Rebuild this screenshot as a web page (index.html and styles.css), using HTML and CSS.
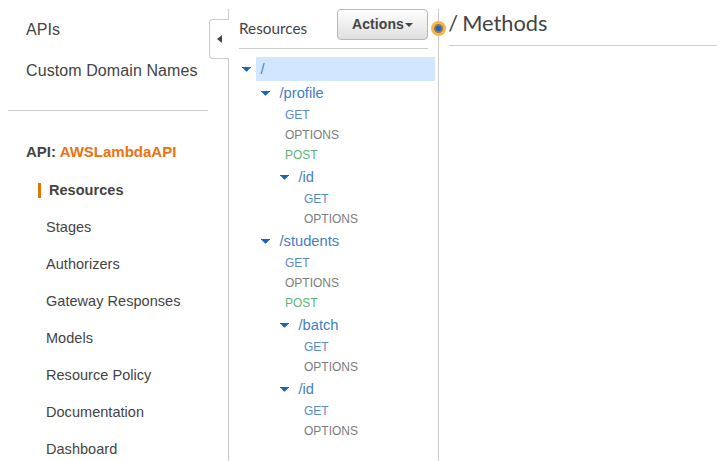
FILE: index.html
```html
<!DOCTYPE html>
<html lang="en">
<head>
<meta charset="utf-8">
<title>API Gateway - Resources</title>
<link rel="stylesheet" href="styles.css">
</head>
<body>
<div class="layout">
  <nav class="sidebar">
    <div class="top-links">
      <a>APIs</a>
      <a>Custom Domain Names</a>
    </div>
    <div class="api-name">API: <span>AWSLambdaAPI</span></div>
    <ul class="nav">
      <li class="active"><span>Resources</span></li>
      <li>Stages</li>
      <li>Authorizers</li>
      <li>Gateway Responses</li>
      <li>Models</li>
      <li>Resource Policy</li>
      <li>Documentation</li>
      <li>Dashboard</li>
    </ul>
    <div class="collapse"><svg width="5" height="8" viewBox="0 0 5 8"><path d="M5 0v8L0 4z" fill="#444"/></svg></div>
  </nav>
  <section class="panel">
    <header class="panel-head">
      <h2>Resources</h2>
      <button class="actions">Actions<i class="caret"></i></button>
    </header>
    <ul class="tree">
      <li class="res root"><i class="arrow"></i><span>/</span></li>
      <li class="res l1"><i class="arrow"></i><span>/profile</span></li>
      <li class="method l1 get">GET</li>
      <li class="method l1">OPTIONS</li>
      <li class="method l1 post">POST</li>
      <li class="res l2"><i class="arrow"></i><span>/id</span></li>
      <li class="method l2 get">GET</li>
      <li class="method l2">OPTIONS</li>
      <li class="res l1"><i class="arrow"></i><span>/students</span></li>
      <li class="method l1 get">GET</li>
      <li class="method l1">OPTIONS</li>
      <li class="method l1 post">POST</li>
      <li class="res l2"><i class="arrow"></i><span>/batch</span></li>
      <li class="method l2 get">GET</li>
      <li class="method l2">OPTIONS</li>
      <li class="res l2"><i class="arrow"></i><span>/id</span></li>
      <li class="method l2 get">GET</li>
      <li class="method l2">OPTIONS</li>
    </ul>
    <div class="handle"></div>
  </section>
  <main class="main"><h1>/ Methods</h1></main>
</div>
</body>
</html>
```
FILE: styles.css
```css
* { box-sizing: border-box; }
body {
  margin: 0;
  background: #fff;
  color: #444;
  font-family: "Liberation Sans", Arial, sans-serif;
  overflow: hidden;
}
ul { list-style: none; margin: 0; padding: 0; }
h1, h2 { margin: 0; font-family: Lato, sans-serif; font-weight: 400; }
.layout { display: flex; height: 461px; padding-top: 9px; }

.sidebar { position: relative; width: 229px; border-right: 1px solid #ccc; }
.top-links {
  display: flex;
  flex-direction: column;
  width: 200px;
  height: 102px;
  margin-left: 8px;
  padding-left: 18px;
  border-bottom: 1px solid #ccc;
  font-size: 16px;
  letter-spacing: 0.09px;
  line-height: 41px;
  white-space: nowrap;
}
.api-name { margin: 31px 0 0 26px; font-size: 15px; font-weight: 700; line-height: 20px; }
.api-name span { color: #ec7211; }
.nav { padding: 10px 0 0 46px; font-size: 14.5px; letter-spacing: 0.04px; }
.nav li { height: 37px; line-height: 37px; }
.nav .active { display: flex; align-items: center; margin-left: -8px; font-weight: 700; }
.nav .active span { border-left: 3px solid #e07700; padding-left: 8px; line-height: 15px; }
.collapse {
  position: absolute;
  top: 10px;
  right: -1px;
  width: 20px;
  height: 40px;
  display: flex;
  align-items: center;
  padding-left: 7px;
  border: 1px solid #ccc;
  border-right: 0;
  border-radius: 4px 0 0 4px;
  background: #fff;
}

.panel { position: relative; width: 210px; border-right: 1px solid #ccc; }
.panel-head {
  display: flex;
  justify-content: space-between;
  height: 40px;
  margin: 0 10px;
  border-bottom: 1px solid #ccc;
}
.panel-head h2 { font-size: 15.3px; line-height: 39px; }
.actions {
  display: flex;
  align-items: center;
  justify-content: center;
  width: 91px;
  height: 31px;
  padding: 0 0 1px;
  border: 1px solid #b7b7b7;
  border-radius: 4px;
  background: linear-gradient(#fff, #dedede);
  color: #444;
  font: 700 14px "Liberation Sans", Arial, sans-serif;
  letter-spacing: 0.1px;
}
.caret { margin: 1px 0 0 1px; border: solid transparent; border-width: 4px 4px 0; border-top-color: #444; }

.tree { padding-top: 8px; }
.res { display: flex; align-items: center; height: 24px; padding-left: 13px; color: #447dc4; font-size: 14.7px; }
.res span { flex: 1; margin: 0 3px 0 5px; padding-left: 4.5px; line-height: 24px; }
.root span { background: #d0e7ff; }
.arrow { width: 9px; height: 5px; background: #1a64bd; clip-path: polygon(0 0, 100% 0, 100% 15%, 55% 100%, 45% 100%, 0 15%); }
.res.l1 { padding-left: 32px; }
.res.l2 { padding-left: 51px; }
.method { height: 20px; padding-left: 56px; color: #7d7d7d; font-size: 12px; line-height: 20px; }
.method.l2 { padding-left: 75px; }
.method.get { color: #5a8cc0; }
.method.post { color: #5cb57c; }
.handle {
  position: absolute;
  top: 12px;
  right: -8px;
  width: 15px;
  height: 15px;
  border-radius: 50%;
  background: radial-gradient(circle, #1a64bd 2px, #8a7d55 3.2px 4px, #ffb143 5px);
}

.main { flex: 1; padding-left: 10px; }
.main h1 { height: 37px; border-bottom: 1px solid #ccc; font-size: 21.8px; line-height: 28px; word-spacing: -1.5px; text-indent: -0.8px; }
```
